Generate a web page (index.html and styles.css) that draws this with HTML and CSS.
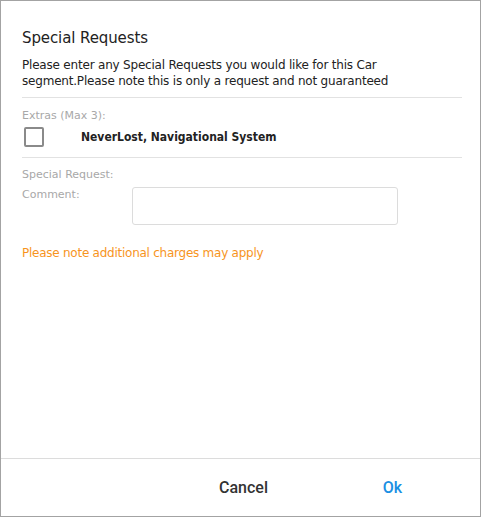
FILE: index.html
```html
<!DOCTYPE html>
<html lang="en">
<head>
  <meta charset="UTF-8" />
  <meta name="viewport" content="width=device-width, initial-scale=1.0"/>
  <title>Special Requests</title>
  <link rel="stylesheet" href="styles.css">
</head>
<body>

  <div class="dialog">
    <div class="dialog-body">
      <h2>Special Requests</h2>
      <p class="intro">Please enter any Special Requests you would like for this Car segment.Please note this is only a request and not guaranteed</p>

      <div class="section">
        <div class="label">Extras (Max 3):</div>
        <label class="extra">
          <input type="checkbox" />
          <span class="box"></span>
          <span class="extra-name">NeverLost, Navigational System</span>
        </label>
      </div>

      <div class="section">
        <div class="label">Special Request:</div>
        <div class="comment-row">
          <span class="label">Comment:</span>
          <textarea class="comment"></textarea>
        </div>
      </div>

      <p class="charges">Please note additional charges may apply</p>
    </div>

    <div class="dialog-footer">
      <button class="btn btn-cancel">Cancel</button>
      <button class="btn btn-ok">Ok</button>
    </div>
  </div>

</body>
</html>
```

FILE: styles.css
```css
body {
  margin: 0;
  font-family: "DejaVu Sans", sans-serif;
  background: #fff;
}

.dialog {
  width: 481px;
  height: 517px;
  box-sizing: border-box;
  border: 1px solid #a3a3a3;
  display: flex;
  flex-direction: column;
  background: #fff;
}

.dialog-body {
  flex: 1;
  padding: 26px 18px 0 21px;
}

h2 {
  margin: 0;
  font-size: 15px;
  font-weight: normal;
  color: #222;
  line-height: 22px;
  letter-spacing: -0.1px;
}

.intro {
  margin: 8px 0 0;
  font-size: 12px;
  line-height: 16px;
  letter-spacing: -0.2px;
  color: #222;
  padding-bottom: 8px;
  border-bottom: 1px solid #e2e2e2;
}

.section {
  padding: 11px 0 0;
}

.section + .section {
  border-top: 1px solid #e2e2e2;
  margin-top: 10px;
  padding-top: 10px;
}

.label {
  font-size: 11px;
  line-height: 14px;
  color: #a8a8a8;
}

.extra {
  display: flex;
  align-items: center;
  margin-top: 4px;
}

.extra input {
  display: none;
}

.box {
  width: 16px;
  height: 16px;
  border: 2px solid #8a8a8a;
  border-radius: 2px;
  margin-left: 2px;
}

.extra-name {
  margin-left: 37px;
  font-size: 12px;
  font-weight: bold;
  font-stretch: condensed;
  color: #222;
}

.comment-row {
  display: flex;
  align-items: flex-start;
  margin-top: 6px;
}

.comment-row .label {
  width: 110px;
}

.comment {
  width: 266px;
  height: 38px;
  box-sizing: border-box;
  border: 1px solid #dcdcdc;
  border-radius: 3px;
  resize: none;
  margin: -1px 0 0;
}

.charges {
  margin: 21px 0 0;
  font-size: 12px;
  line-height: 14px;
  letter-spacing: -0.25px;
  color: #f7941d;
}

.dialog-footer {
  height: 57px;
  border-top: 1px solid #dcdcdc;
  display: flex;
  justify-content: flex-end;
  padding-right: 13px;
}

.btn {
  width: 149px;
  border: none;
  background: none;
  font-family: Roboto, sans-serif;
  font-size: 16px;
  font-weight: 500;
  cursor: pointer;
}

.btn-cancel {
  color: #333;
}

.btn-ok {
  color: #1a8fe3;
}
```
